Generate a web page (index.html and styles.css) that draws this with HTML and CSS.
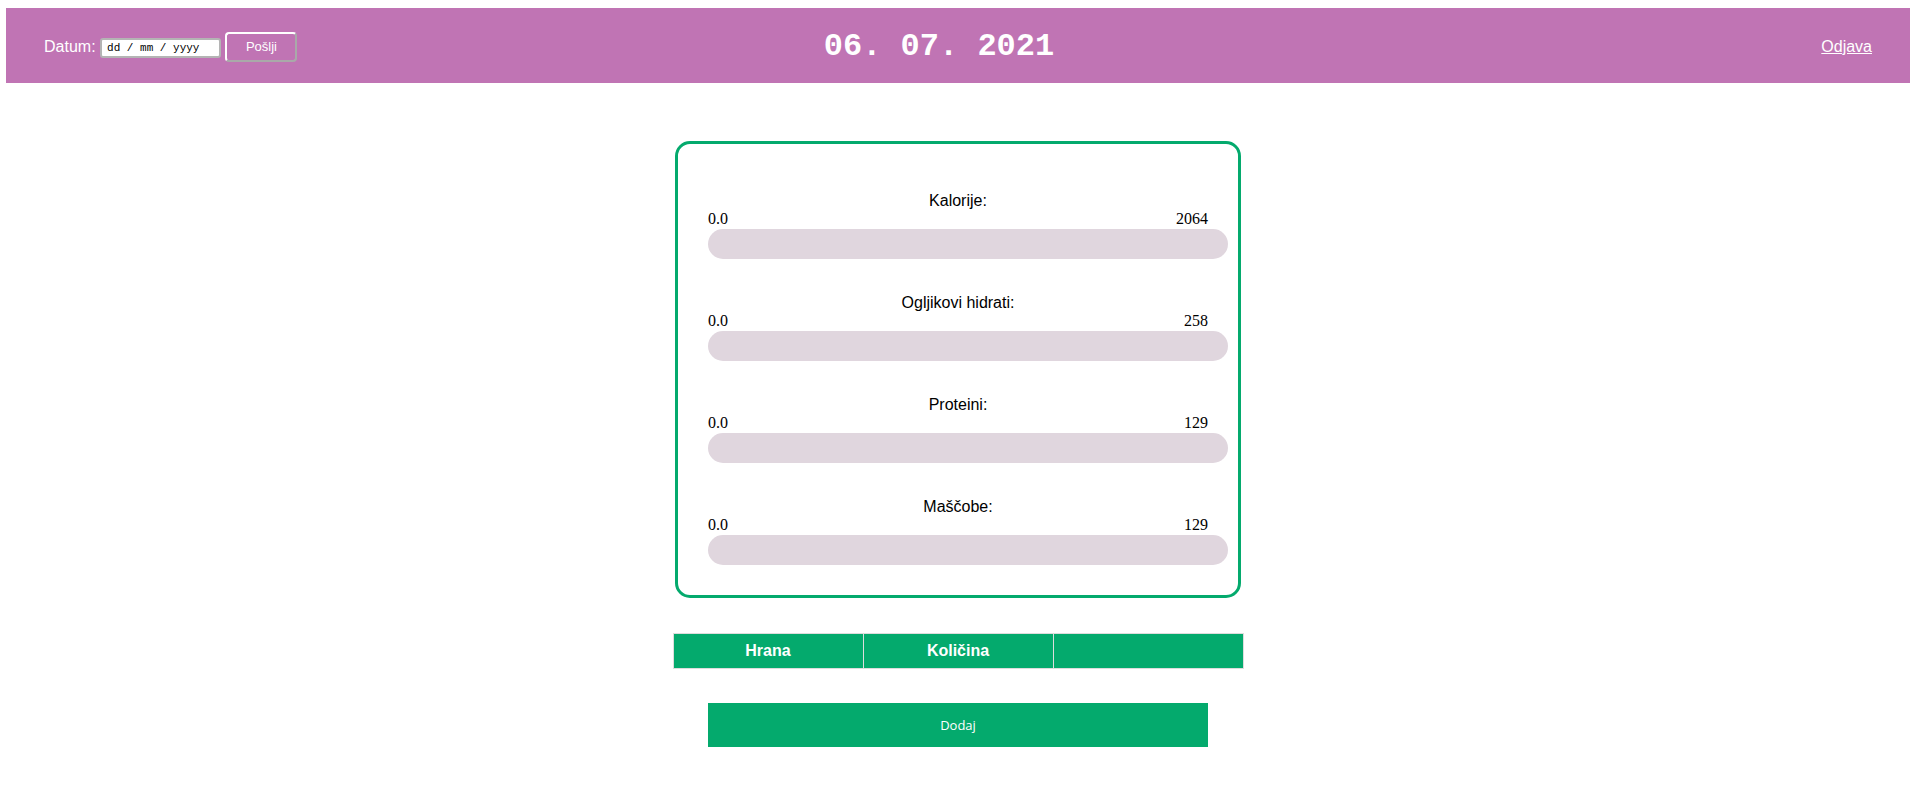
FILE: index.html
```html
<!DOCTYPE html>
<html lang="sl">
<head>
<meta charset="utf-8">
<title>Dnevnik prehrane</title>
<link rel="stylesheet" href="styles.css">
</head>
<body>
<header class="topbar">
  <div class="date-form">
    <span class="date-label">Datum:</span>
    <span class="date-input">dd / mm / yyyy</span>
    <button class="btn-send" type="button">Pošlji</button>
  </div>
  <h1 class="today">06. 07. 2021</h1>
  <div class="logout-wrap"><a class="logout" href="#">Odjava</a></div>
</header>
<main class="content">
  <section class="summary-card">
    <div class="stat">
      <div class="stat-label">Kalorije:</div>
      <div class="stat-range"><span>0.0</span><span>2064</span></div>
      <div class="stat-bar"></div>
    </div>
    <div class="stat">
      <div class="stat-label">Ogljikovi hidrati:</div>
      <div class="stat-range"><span>0.0</span><span>258</span></div>
      <div class="stat-bar"></div>
    </div>
    <div class="stat">
      <div class="stat-label">Proteini:</div>
      <div class="stat-range"><span>0.0</span><span>129</span></div>
      <div class="stat-bar"></div>
    </div>
    <div class="stat">
      <div class="stat-label">Maščobe:</div>
      <div class="stat-range"><span>0.0</span><span>129</span></div>
      <div class="stat-bar"></div>
    </div>
  </section>
  <table class="food-table">
    <thead>
      <tr><th>Hrana</th><th>Količina</th><th></th></tr>
    </thead>
  </table>
  <button class="add-btn" type="button">Dodaj</button>
</main>
</body>
</html>
```
FILE: styles.css
```css
body {
  margin: 8px 8px 8px 6px;
  font-family: "Liberation Sans", Arial, sans-serif;
  background: #ffffff;
  color: #000000;
}

.topbar {
  height: 75px;
  box-sizing: border-box;
  padding: 0 38px;
  background: #c074b4;
  color: #ffffff;
  display: flex;
  align-items: center;
}

.date-form {
  flex: 1 1 0;
  font-size: 16px;
  white-space: nowrap;
  padding-top: 2px;
}

.date-input {
  display: inline-block;
  box-sizing: border-box;
  width: 121px;
  height: 20px;
  padding: 0 4px 0 5px;
  border: 2px solid #b4b4b4;
  border-radius: 3px;
  background: #ffffff;
  color: #000000;
  font-family: "Liberation Mono", "Courier New", monospace;
  font-size: 11px;
  line-height: 16px;
  vertical-align: baseline;
}

.btn-send {
  box-sizing: border-box;
  width: 72px;
  height: 30px;
  padding: 0;
  border: 2px solid;
  border-color: #ffffff #a9a9a9 #a9a9a9 #ffffff;
  border-radius: 4px;
  background: transparent;
  color: #ffffff;
  font-family: "Liberation Sans", Arial, sans-serif;
  font-size: 13px;
  vertical-align: baseline;
}

.today {
  flex: none;
  margin: 0 38px 0 0;
  padding-top: 2px;
  font-family: "Liberation Mono", "Courier New", monospace;
  font-weight: bold;
  font-size: 32px;
  line-height: normal;
  color: #ffffff;
}

.logout-wrap {
  flex: 1 1 0;
  text-align: right;
  padding-top: 2px;
}

.logout {
  color: #ffffff;
  font-size: 16px;
  text-decoration: underline;
}

.content {
  display: flex;
  flex-direction: column;
  align-items: center;
  padding-top: 58px;
}

.summary-card {
  width: 500px;
  padding: 48px 30px 30px;
  border: 3px solid #04aa6d;
  border-radius: 15px;
  display: flex;
  flex-direction: column;
  gap: 35.2px;
}

.stat-label {
  text-align: center;
  font-size: 16px;
  line-height: 18.4px;
}

.stat-range {
  display: flex;
  justify-content: space-between;
  font-family: "Liberation Serif", "Times New Roman", serif;
  font-size: 16px;
  line-height: 18.4px;
}

.stat-bar {
  height: 30px;
  margin-right: -20px;
  border-radius: 15px;
  background: #e0d6de;
}

.food-table {
  margin-top: 35px;
  width: 571px;
  border-collapse: collapse;
  background: #04aa6d;
  color: #ffffff;
}

.food-table th {
  width: 33.33%;
  padding: 8px;
  border: 1px solid #dddddd;
  font-size: 16px;
  line-height: 18px;
  font-weight: bold;
  text-align: center;
}

.add-btn {
  margin-top: 34px;
  width: 500px;
  height: 44px;
  border: none;
  background: #04aa6d;
  color: #ffffff;
  font-family: "Open Sans", "Noto Sans", sans-serif;
  font-size: 13px;
}
```
